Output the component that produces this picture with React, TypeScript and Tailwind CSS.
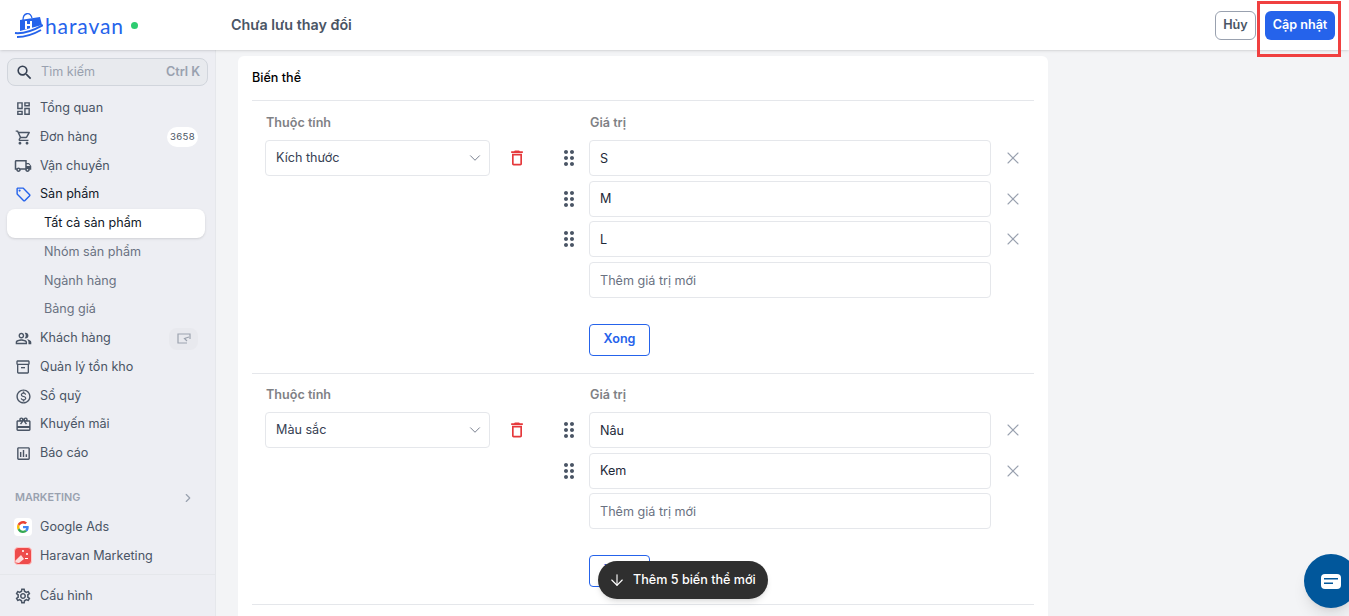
import type { FC, ReactNode } from "react";
import { ArrowDown, ChevronDown, ChevronRight, X } from "lucide-react";
import {
  MdDragIndicator,
  MdOutlineAssessment,
  MdOutlineDashboard,
  MdOutlineDelete,
  MdOutlineInventory2,
  MdOutlineLocalOffer,
  MdOutlineLocalShipping,
  MdOutlineMonetizationOn,
  MdOutlinePeopleAlt,
  MdOutlineRedeem,
  MdOutlineSettings,
  MdOutlineShoppingCart,
  MdSearch,
} from "react-icons/md";

const NavItem: FC<{ icon: ReactNode; label: string; active?: boolean; right?: ReactNode }> = ({
  icon,
  label,
  active,
  right,
}) => (
  <div className="flex h-[28.75px] items-center pl-[14px] pr-[17px]">
    <span className={`flex w-[18px] justify-center ${active ? "text-[#2563eb]" : "text-gray-600"}`}>{icon}</span>
    <span className={`ml-[8px] flex-1 text-[12.6px] ${active ? "text-gray-900" : "text-gray-600"}`}>{label}</span>
    {right}
  </div>
);

const SubItem: FC<{ label: string; active?: boolean }> = ({ label, active }) => (
  <div
    className={`ml-[7px] mr-[10px] flex h-[28.75px] items-center rounded-lg pl-[37px] text-[12.6px] ${
      active ? "bg-white text-gray-900 shadow-sm" : "text-gray-500"
    }`}
  >
    {label}
  </div>
);

const Sidebar = () => (
  <aside className="flex w-[216px] shrink-0 flex-col border-r border-gray-200 bg-[#edeef3] pt-2">
    <div className="mx-[7px] flex h-[28px] items-center rounded-lg border border-gray-300 bg-[#e8eaee] pl-[7px] pr-[7px] pt-[1px] text-[12.6px]">
      <MdSearch className="text-gray-700" size={19} />
      <span className="ml-[7px] flex-1 text-gray-400">Tìm kiếm</span>
      <span className="font-semibold text-gray-400">Ctrl</span>
      <span className="ml-[3px] font-semibold text-gray-400">K</span>
    </div>
    <div className="mt-[8.6px]">
      <NavItem icon={<MdOutlineDashboard size={17} />} label="Tổng quan" />
      <NavItem
        icon={<MdOutlineShoppingCart size={17} />}
        label="Đơn hàng"
        right={
          <span className="flex h-[20px] w-[31px] items-center justify-center rounded-full bg-white text-[9.6px] tracking-[0.3px] text-gray-600">
            3658
          </span>
        }
      />
      <NavItem icon={<MdOutlineLocalShipping size={18} />} label="Vận chuyển" />
      <NavItem icon={<MdOutlineLocalOffer size={17} />} label="Sản phẩm" active />
      <SubItem label="Tất cả sản phẩm" active />
      <SubItem label="Nhóm sản phẩm" />
      <SubItem label="Ngành hàng" />
      <SubItem label="Bảng giá" />
      <NavItem
        icon={<MdOutlinePeopleAlt size={17} />}
        label="Khách hàng"
        right={
          <span className="flex h-[22px] w-[29px] items-center justify-center rounded-lg bg-[#e8e9ee]">
            <svg width="14" height="11" viewBox="0 0 14 11" fill="none" stroke="#9ca3af" strokeWidth="1.2">
              <path d="M13 6V1H1v9h9" />
              <path d="M12 4 7.500 5.500 10 8" />
            </svg>
          </span>
        }
      />
      <NavItem icon={<MdOutlineInventory2 size={16} />} label="Quản lý tồn kho" />
      <NavItem icon={<MdOutlineMonetizationOn size={17} />} label="Sổ quỹ" />
      <NavItem icon={<MdOutlineRedeem size={17} />} label="Khuyến mãi" />
      <NavItem icon={<MdOutlineAssessment size={17} />} label="Báo cáo" />
    </div>
    <div className="mt-[18px] flex h-[24px] items-center justify-between pl-[15px] pr-[20px] text-[10.8px] font-semibold text-gray-400">
      <span>MARKETING</span>
      <ChevronRight size={14} />
    </div>
    <div className="mt-[3.4px] flex h-[29.5px] items-center pl-[14px] text-[12.6px] text-gray-600">
      <span className="flex h-[18px] w-[18px] items-center justify-center rounded bg-white">
        <svg width="12" height="12" viewBox="0 0 48 48">
          <path fill="#EA4335" d="M24 9.500c3.500 0 6.700 1.200 9.200 3.600l6.900-6.900C35.900 2.400 30.400 0 24 0 14.600 0 6.500 5.400 2.600 13.200l8 6.200C12.400 13.700 17.700 9.500 24 9.500z" />
          <path fill="#4285F4" d="M46.900 24.500c0-1.600-.1-3.100-.4-4.500H24v9h12.900c-.6 3-2.200 5.500-4.700 7.200l7.700 6c4.500-4.200 7-10.300 7-17.700z" />
          <path fill="#FBBC05" d="M10.500 28.600c-.5-1.400-.8-3-.8-4.600s.3-3.200.8-4.600l-8-6.200C.9 16.500 0 20.100 0 24s.9 7.500 2.600 10.800l7.900-6.200z" />
          <path fill="#34A853" d="M24 48c6.500 0 11.900-2.100 15.900-5.800l-7.700-6c-2.100 1.400-4.900 2.300-8.200 2.300-6.300 0-11.600-4.200-13.500-9.900l-8 6.200C6.500 42.600 14.600 48 24 48z" />
        </svg>
      </span>
      <span className="ml-2">Google Ads</span>
    </div>
    <div className="flex h-[29px] items-center pl-[14px] text-[12.6px] text-gray-600">
      <span className="h-[18px] w-[18px] rounded border border-red-200 bg-[#ee4b4b]">
        <svg width="16" height="16" viewBox="0 0 16 16" fill="#fff">
          <path d="M0 13 6 7l3 4-5 4-3-.5z" opacity="0.8" />
          <circle cx="8" cy="3" r="1" />
          <circle cx="12" cy="6" r="1" />
          <rect x="10" y="10" width="3" height="1" />
        </svg>
      </span>
      <span className="ml-2">Haravan Marketing</span>
    </div>
    <div className="mt-[3.5px] flex h-[43px] items-center border-t border-gray-200 pl-[14px] pt-[2px] text-[12.6px] text-gray-600">
      <span className="flex w-[18px] justify-center">
        <MdOutlineSettings size={18} />
      </span>
      <span className="ml-[8px]">Cấu hình</span>
    </div>
  </aside>
);

const Value: FC<{ value?: string; placeholder?: string }> = ({ value, placeholder }) => (
  <div className="flex h-[36px] items-center">
    <span className="flex w-[40px] justify-center text-gray-600">
      {value && <MdDragIndicator size={24} />}
    </span>
    <input
      readOnly
      defaultValue={value}
      placeholder={placeholder}
      className="h-[36px] w-[402px] rounded border border-gray-200 px-[10px] text-[12.6px] text-gray-800 outline-none placeholder:text-gray-500"
    />
    {value && <X className="ml-[12px] text-gray-400" size={20} strokeWidth={1.3} />}
  </div>
);

const VariantOption: FC<{ name: string; values: string[]; top: string }> = ({ name, values, top }) => (
  <section className={`flex border-b border-gray-200 pl-[13px] ${top}`}>
    <div className="w-[284px]">
      <div className="ml-[1px] h-[27px] text-[12.6px] font-semibold leading-[20px] text-[#7f8185]">Thuộc tính</div>
      <div className="flex items-center">
        <div className="flex h-[36px] w-[225px] items-center justify-between rounded border border-gray-200 pl-[10px] pr-[5px] text-[12.6px] text-gray-700">
          {name}
          <ChevronDown className="text-gray-500" size={18} strokeWidth={1.2} />
        </div>
        <MdOutlineDelete className="ml-[17px] text-[#e5383b]" size={20} />
      </div>
    </div>
    <div className="pb-[17px]">
      <div className="ml-[41px] h-[27px] text-[12.6px] font-semibold leading-[20px] text-[#7f8185]">Giá trị</div>
      <div className="flex flex-col gap-[4.7px]">
        {values.map((value) => (
          <Value key={value} value={value} />
        ))}
        <Value placeholder="Thêm giá trị mới" />
      </div>
      <button className="ml-[40px] mt-[26px] h-[32px] w-[61px] rounded border border-[#2563eb] pb-[1px] text-[12.6px] font-semibold text-[#2563eb]">
        Xong
      </button>
    </div>
  </section>
);

export default function App() {
  return (
    <div className="relative flex h-[616px] w-[1349px] flex-col overflow-hidden bg-[#f3f4f6] font-['Inter',sans-serif]">
      <header className="z-10 flex h-[50px] shrink-0 items-center bg-white shadow">
        <div className="flex w-[231px] items-center pl-[14px]">
          <svg width="29" height="27" viewBox="0 0 29 27" fill="#2563eb">
            <path d="M9 8C9 1 16-1 18 6" fill="none" stroke="#2563eb" strokeWidth="1.300" />
            <path d="M6 8 26 5l2 8-22 6z" />
            <path d="M1 21c9 1 19-3 28-8" fill="none" stroke="#2563eb" strokeWidth="2" />
            <path d="M3 25c9 0 17-3 24-7" fill="none" stroke="#2563eb" strokeWidth="2" />
            <path d="M11 9h2v3h3V9h2v8h-2v-3h-3v3h-2z" fill="#fff" />
          </svg>
          <span className="ml-[2px] font-['Lato',sans-serif] text-[21px] font-normal leading-none tracking-[0.9px] text-[#2563eb]">
            haravan
          </span>
          <span className="ml-[7px] h-[7px] w-[7px] rounded-full bg-[#2ecc71]" />
        </div>
        <span className="mb-[1px] flex-1 text-[14.3px] font-semibold text-gray-600">Chưa lưu thay đổi</span>
        <button className="h-[29px] w-[41px] rounded-md border border-gray-400 text-[12.6px] font-semibold text-gray-600">
          Hủy
        </button>
        <button className="ml-[9px] mr-[14px] h-[29px] w-[70px] rounded-md bg-[#2563eb] text-[12.6px] font-semibold text-white">
          Cập nhật
        </button>
      </header>
      <div className="flex min-h-0 flex-1">
        <Sidebar />
        <main className="min-w-0 flex-1 overflow-hidden pl-[22px] pt-[6px]">
          <div className="w-[810px] rounded-t-md bg-white px-[14px] pb-[40px]">
            <h2 className="flex h-[45px] items-center border-b border-gray-200 pt-[1px] text-[12.6px] font-medium text-black">
              Biến thể
            </h2>
            <VariantOption name="Kích thước" values={["S", "M", "L"]} top="pt-[12px]" />
            <VariantOption name="Màu sắc" values={["Nâu", "Kem"]} top="pt-[11px]" />
          </div>
        </main>
      </div>
      <div className="absolute left-[1257px] top-[1px] z-20 h-[56px] w-[84px] border-[3px] border-[#f04040]" />
      <div className="absolute left-[598px] top-[561px] z-20 flex h-[38px] w-[170px] items-center rounded-[19px] bg-[#2f2f2f] pl-[10px] text-[12.6px] font-medium text-white shadow-md">
        <ArrowDown size={18} strokeWidth={1.5} />
        <span className="ml-[7px]">Thêm 5 biến thể mới</span>
      </div>
      <div className="absolute left-[1304px] top-[554px] z-20 flex h-[54px] w-[54px] items-center rounded-full bg-[#01579b] pl-[17px] shadow-lg">
        <svg width="20" height="15" viewBox="0 0 20 15">
          <rect width="20" height="15" rx="4" fill="#fff" />
          <rect x="3" y="4" width="14" height="1.500" fill="#01579b" />
          <rect x="3" y="8.500" width="9" height="1.500" fill="#01579b" />
        </svg>
      </div>
    </div>
  );
}
